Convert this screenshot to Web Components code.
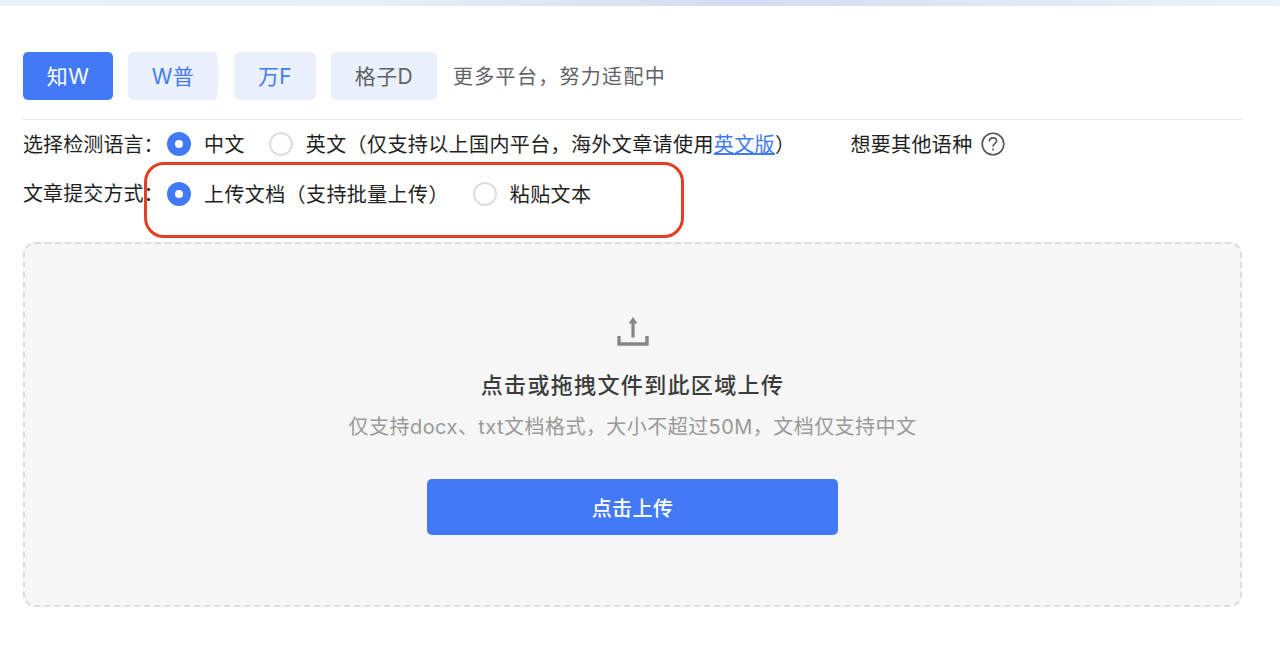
<!DOCTYPE html>
<html lang="zh">
<head>
<meta charset="utf-8">
<title>检测</title>
<style>
    html, body { margin: 0; background: #fff; }
    body { font-family: "Inter", "Noto Sans CJK SC", sans-serif; color: #1f1f1f; overflow: hidden; }
</style>
</head>
<body>
<check-page></check-page>

<script>
class PlatformTab extends HTMLElement {
    constructor() {
        super();
        this.attachShadow({mode: "open"}).innerHTML = `
        <style>
            :host {
                display: flex;
                align-items: center;
                justify-content: center;
                height: 48px;
                box-sizing: border-box;
                padding-bottom: 2px;
                border-radius: 5px;
                background: #ebf1fc;
                color: #4279f6;
                font-size: 21px;
                letter-spacing: .4px;
            }
            :host([active]) { background: #4279f6; color: #fff; }
            :host([muted]) { color: #5f6368; }
        </style>
        <slot></slot>`;
    }
}
customElements.define("platform-tab", PlatformTab);

class RadioOption extends HTMLElement {
    constructor() {
        super();
        this.attachShadow({mode: "open"}).innerHTML = `
        <style>
            :host {
                display: inline-flex;
                align-items: center;
                gap: 13px;
                font-size: 20px;
                line-height: 28px;
                letter-spacing: .4px;
                color: #1f1f1f;
                white-space: nowrap;
            }
            .dot {
                width: 24px;
                height: 24px;
                box-sizing: border-box;
                border-radius: 50%;
                border: 2px solid #dedede;
                background: #fff;
                flex: none;
            }
            :host([checked]) .dot {
                border: 8px solid #4279f6;
            }
            .text { padding-top: 1px; }
        </style>
        <span class="dot"></span><span class="text"><slot></slot></span>`;
    }
}
customElements.define("radio-option", RadioOption);

class UploadZone extends HTMLElement {
    constructor() {
        super();
        this.attachShadow({mode: "open"}).innerHTML = `
        <style>
            :host {
                display: flex;
                flex-direction: column;
                align-items: center;
                height: 365px;
                box-sizing: border-box;
                border: 2px dashed #dcdcdc;
                border-radius: 12px;
                background: #f6f6f6;
                padding-top: 72px;
            }
            svg { display: block; }
            h3 {
                margin: 21px 0 0;
                font-size: 22px;
                line-height: 32px;
                font-weight: 500;
                letter-spacing: 1.35px;
                color: #3c3c3c;
            }
            p {
                margin: 11px 0 0;
                font-size: 20px;
                line-height: 30px;
                letter-spacing: .45px;
                color: #999;
            }
            button {
                margin-top: 37px;
                width: 411px;
                height: 56px;
                border: 0;
                border-radius: 5px;
                background: #4279f6;
                color: #fff;
                letter-spacing: .4px;
                font-family: "Inter", "Noto Sans CJK SC", sans-serif;
                font-size: 20px;
                font-weight: 500;
            }
        </style>
        <svg width="32" height="32" viewBox="0 0 32 32" fill="none">
            <path d="M16 1 L11.5 7.5 H14.4 V21.5 H17.6 V7.5 H20.5 Z" fill="#868686"/>
            <path d="M2 20 V28 H30 V20" stroke="#868686" stroke-width="3.4"/>
        </svg>
        <h3>点击或拖拽文件到此区域上传</h3>
        <p>仅支持docx、txt文档格式，大小不超过50M，文档仅支持中文</p>
        <button>点击上传</button>`;
    }
}
customElements.define("upload-zone", UploadZone);

class CheckPage extends HTMLElement {
    constructor() {
        super();
        this.attachShadow({mode: "open"}).innerHTML = `
        <style>
            :host { display: block; height: 668px; }
            .topbar {
                height: 6px;
                background: linear-gradient(90deg, #e8f3f5 0%, #e6eff5 30%, #d5dcf4 58%, #e4ebf7 85%, #eaf4f7 100%);
            }
            main { padding: 46px 38px 0 23px; }
            .tabs {
                display: flex;
                align-items: center;
                padding-bottom: 19px;
                border-bottom: 1px solid #e8e8e8;
            }
            .tabs platform-tab:nth-child(1) { width: 90px; }
            .tabs platform-tab:nth-child(2) { width: 90px; margin-left: 15px; }
            .tabs platform-tab:nth-child(3) { width: 82px; margin-left: 16px; }
            .tabs platform-tab:nth-child(4) { width: 106px; margin-left: 15px; }
            .more { margin-left: 16px; padding-bottom: 2px; font-size: 20px; letter-spacing: 1.3px; color: #5f6368; }
            .row {
                position: relative;
                display: flex;
                align-items: center;
                height: 28px;
                line-height: 28px;
                font-size: 20px;
                white-space: nowrap;
            }
            .lang { margin-top: 10px; }
            .lang .label { padding-top: 1px; }
            .way { margin-top: 22px; }
            .label { width: 144px; flex: none; letter-spacing: .1px; }
            a { color: #4279f6; text-decoration: underline; }
            .other { display: inline-flex; align-items: center; gap: 8px; margin-left: 55px; letter-spacing: .35px; }
            .other span { padding-top: 1px; }
            .other svg { display: block; }
            .mark {
                position: absolute;
                left: 121px;
                top: -18px;
                width: 540px;
                height: 76px;
                box-sizing: border-box;
                border: 3px solid #e63e25;
                border-radius: 20px;
            }
            upload-zone { margin-top: 34px; }
        </style>
        <div class="topbar"></div>
        <main>
            <div class="tabs">
                <platform-tab active>知W</platform-tab>
                <platform-tab>W普</platform-tab>
                <platform-tab>万F</platform-tab>
                <platform-tab muted>格子D</platform-tab>
                <span class="more">更多平台，努力适配中</span>
            </div>
            <div class="row lang">
                <span class="label">选择检测语言：</span>
                <radio-option checked>中文</radio-option>
                <radio-option style="margin-left:24px">英文（仅支持以上国内平台，海外文章请使用<a href="#">英文版</a>）</radio-option>
                <div class="other"><span>想要其他语种</span>
                    <svg width="24" height="24" viewBox="0 0 24 24" fill="none" stroke="#555" stroke-width="1.6">
                        <circle cx="12" cy="12" r="10.8"/>
                        <path d="M8.4 9.5 C8.4 7.2 10 5.9 12 5.9 C14.1 5.9 15.6 7.3 15.6 9.1 C15.6 11.6 12 11.9 12 14.8"/>
                        <path d="M12 16.6 V18.4"/>
                    </svg>
                </div>
            </div>
            <div class="row way">
                <span class="label">文章提交方式：</span>
                <radio-option checked>上传文档（支持批量上传）</radio-option>
                <radio-option style="margin-left:24px">粘贴文本</radio-option>
                <span class="mark"></span>
            </div>
            <upload-zone></upload-zone>
        </main>`;
    }
}
customElements.define("check-page", CheckPage);
</script>
</body>
</html>
